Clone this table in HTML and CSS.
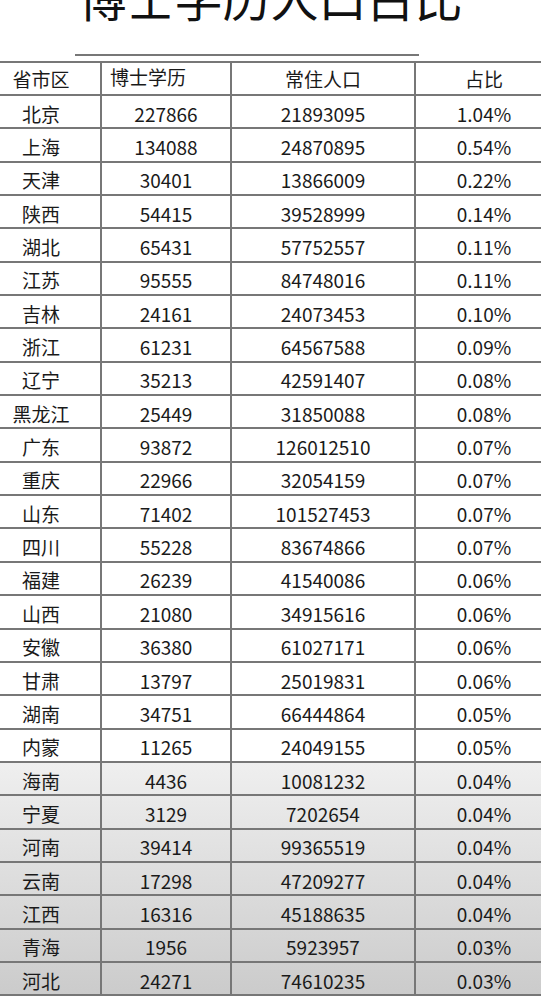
FILE: index.html
```html
<!DOCTYPE html>
<html lang="zh-CN">
<head>
<meta charset="utf-8">
<title>博士学历人口占比</title>
<link rel="stylesheet" href="styles.css">
</head>
<body>
<div class="title">博士学历人口占比</div>
<div class="rule"></div>
<div class="table">
  <div class="row head"><div class="c c1">省市区</div><div class="c c2 left">博士学历</div><div class="c c3">常住人口</div><div class="c c4">占比</div></div>
  <div class="row"><div class="c c1">北京</div><div class="c c2">227866</div><div class="c c3">21893095</div><div class="c c4">1.04%</div></div>
  <div class="row"><div class="c c1">上海</div><div class="c c2">134088</div><div class="c c3">24870895</div><div class="c c4">0.54%</div></div>
  <div class="row"><div class="c c1">天津</div><div class="c c2">30401</div><div class="c c3">13866009</div><div class="c c4">0.22%</div></div>
  <div class="row"><div class="c c1">陕西</div><div class="c c2">54415</div><div class="c c3">39528999</div><div class="c c4">0.14%</div></div>
  <div class="row"><div class="c c1">湖北</div><div class="c c2">65431</div><div class="c c3">57752557</div><div class="c c4">0.11%</div></div>
  <div class="row"><div class="c c1">江苏</div><div class="c c2">95555</div><div class="c c3">84748016</div><div class="c c4">0.11%</div></div>
  <div class="row"><div class="c c1">吉林</div><div class="c c2">24161</div><div class="c c3">24073453</div><div class="c c4">0.10%</div></div>
  <div class="row"><div class="c c1">浙江</div><div class="c c2">61231</div><div class="c c3">64567588</div><div class="c c4">0.09%</div></div>
  <div class="row"><div class="c c1">辽宁</div><div class="c c2">35213</div><div class="c c3">42591407</div><div class="c c4">0.08%</div></div>
  <div class="row"><div class="c c1">黑龙江</div><div class="c c2">25449</div><div class="c c3">31850088</div><div class="c c4">0.08%</div></div>
  <div class="row"><div class="c c1">广东</div><div class="c c2">93872</div><div class="c c3">126012510</div><div class="c c4">0.07%</div></div>
  <div class="row"><div class="c c1">重庆</div><div class="c c2">22966</div><div class="c c3">32054159</div><div class="c c4">0.07%</div></div>
  <div class="row"><div class="c c1">山东</div><div class="c c2">71402</div><div class="c c3">101527453</div><div class="c c4">0.07%</div></div>
  <div class="row"><div class="c c1">四川</div><div class="c c2">55228</div><div class="c c3">83674866</div><div class="c c4">0.07%</div></div>
  <div class="row"><div class="c c1">福建</div><div class="c c2">26239</div><div class="c c3">41540086</div><div class="c c4">0.06%</div></div>
  <div class="row"><div class="c c1">山西</div><div class="c c2">21080</div><div class="c c3">34915616</div><div class="c c4">0.06%</div></div>
  <div class="row"><div class="c c1">安徽</div><div class="c c2">36380</div><div class="c c3">61027171</div><div class="c c4">0.06%</div></div>
  <div class="row"><div class="c c1">甘肃</div><div class="c c2">13797</div><div class="c c3">25019831</div><div class="c c4">0.06%</div></div>
  <div class="row"><div class="c c1">湖南</div><div class="c c2">34751</div><div class="c c3">66444864</div><div class="c c4">0.05%</div></div>
  <div class="row"><div class="c c1">内蒙</div><div class="c c2">11265</div><div class="c c3">24049155</div><div class="c c4">0.05%</div></div>
  <div class="row"><div class="c c1">海南</div><div class="c c2">4436</div><div class="c c3">10081232</div><div class="c c4">0.04%</div></div>
  <div class="row"><div class="c c1">宁夏</div><div class="c c2">3129</div><div class="c c3">7202654</div><div class="c c4">0.04%</div></div>
  <div class="row"><div class="c c1">河南</div><div class="c c2">39414</div><div class="c c3">99365519</div><div class="c c4">0.04%</div></div>
  <div class="row"><div class="c c1">云南</div><div class="c c2">17298</div><div class="c c3">47209277</div><div class="c c4">0.04%</div></div>
  <div class="row"><div class="c c1">江西</div><div class="c c2">16316</div><div class="c c3">45188635</div><div class="c c4">0.04%</div></div>
  <div class="row"><div class="c c1">青海</div><div class="c c2">1956</div><div class="c c3">5923957</div><div class="c c4">0.03%</div></div>
  <div class="row"><div class="c c1">河北</div><div class="c c2">24271</div><div class="c c3">74610235</div><div class="c c4">0.03%</div></div>
</div>
</body>
</html>
```
FILE: styles.css
```css
html, body {
  margin: 0;
  padding: 0;
}
body {
  width: 541px;
  height: 996px;
  overflow: hidden;
  background: linear-gradient(to bottom, #ffffff 0, #ffffff 762px, #efefef 763px, #cbcbcb 996px);
  font-family: "Noto Sans CJK SC", "Noto Sans", sans-serif;
  color: #1a1a1a;
}
.title {
  font-size: 48px;
  line-height: 48px;
  height: 48px;
  margin-top: -28px;
  text-align: center;
  color: #111;
}
.rule {
  margin: 34px 0 0 75px;
  width: 344px;
  border-top: 2px solid #777;
}
.table {
  margin-top: 5px;
  margin-left: -18px;
  width: 570px;
  border-top: 2px solid #777;
}
.row {
  display: grid;
  grid-template-columns: 120px 130px 184px 136px;
  height: 33.35px;
  box-sizing: border-box;
  border-bottom: 2px solid #777;
}
.row.head {
  height: 33px;
}
.c {
  display: flex;
  align-items: center;
  justify-content: center;
  padding-top: 3px;
  font-size: 19px;
  line-height: 1;
  border-right: 2px solid #777;
  white-space: nowrap;
}
.c4 {
  border-right: none;
}
.head .c {
  padding-top: 0;
}
.head .left {
  justify-content: flex-start;
  padding-left: 8px;
  padding-bottom: 4px;
}
```
